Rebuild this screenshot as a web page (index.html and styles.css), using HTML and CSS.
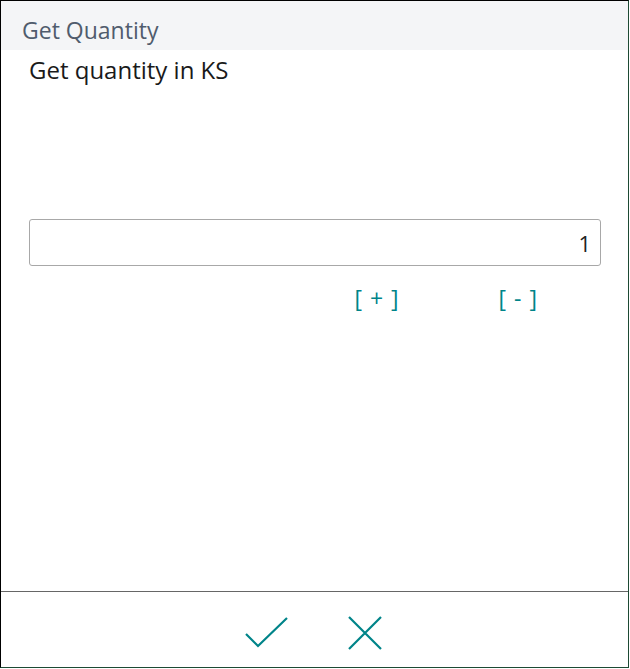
FILE: index.html
```html
<!DOCTYPE html>
<html lang="en">
<head>
  <meta charset="UTF-8" />
  <meta name="viewport" content="width=device-width, initial-scale=1.0"/>
  <title>Get Quantity</title>
  <link rel="stylesheet" href="styles.css">
</head>
<body>

  <div class="dialog">
    <div class="dialog-header">
      <span class="dialog-title">Get Quantity</span>
    </div>

    <div class="dialog-body">
      <div class="prompt">Get quantity in KS</div>
      <input class="qty-input" type="text" value="1">
      <div class="qty-actions">
        <a class="qty-btn" href="#">[ + ]</a>
        <a class="qty-btn" href="#">[ - ]</a>
      </div>
    </div>

    <div class="dialog-footer">
      <button class="icon-btn" title="OK">
        <svg width="44" height="32" viewBox="0 0 44 32">
          <path d="M1 17 L13 29 L42 1" fill="none" stroke="#008489" stroke-width="2.2"/>
        </svg>
      </button>
      <button class="icon-btn" title="Cancel">
        <svg width="34" height="34" viewBox="0 0 34 34">
          <path d="M1 1 L33 33 M33 1 L1 33" fill="none" stroke="#008489" stroke-width="2.2"/>
        </svg>
      </button>
    </div>
  </div>

</body>
</html>
```

FILE: styles.css
```css
body {
  margin: 0;
  padding: 0;
  background-color: #fff;
  font-family: 'Open Sans', 'Noto Sans', sans-serif;
}

.dialog {
  width: 629px;
  height: 668px;
  box-sizing: border-box;
  border: 1px solid #000;
  border-right-color: #1d4a34;
  border-bottom-color: #1d4a34;
  display: flex;
  flex-direction: column;
}

.dialog-header {
  height: 49px;
  background-color: #f4f5f7;
  padding-left: 21px;
  box-sizing: border-box;
  padding-top: 14px;
}

.dialog-title {
  color: #505c6d;
  font-size: 23px;
  line-height: 30px;
}

.dialog-body {
  flex: 1;
  padding: 0 27px 0 28px;
}

.prompt {
  color: #1a1a1a;
  font-size: 24px;
  line-height: 32px;
  margin-top: 4px;
}

.qty-input {
  display: block;
  width: 100%;
  height: 47px;
  box-sizing: border-box;
  margin-top: 133px;
  border: 1px solid #a8a8a8;
  border-radius: 3px;
  padding: 0 9px 0 10px;
  text-align: right;
  font-family: inherit;
  font-size: 22px;
  color: #222;
  outline: none;
}

.qty-actions {
  display: flex;
  justify-content: flex-end;
  gap: 100px;
  padding-right: 64px;
  margin-top: 17px;
}

.qty-btn {
  color: #008489;
  text-decoration: none;
  font-size: 23px;
  line-height: 30px;
  word-spacing: 2px;
}

.dialog-footer {
  height: 76px;
  border-top: 1px solid #666;
  display: flex;
  justify-content: center;
  align-items: center;
  gap: 59px;
  padding-top: 6px;
  padding-right: 3px;
  box-sizing: border-box;
}

.icon-btn {
  background: none;
  border: none;
  padding: 0;
  cursor: pointer;
  display: flex;
}
```
